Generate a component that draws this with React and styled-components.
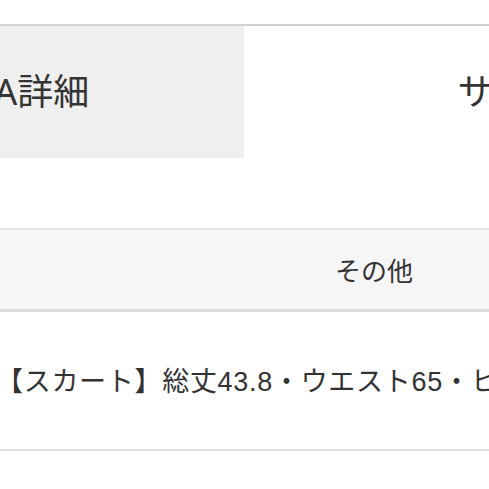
import React from 'react'
import styled, {createGlobalStyle} from 'styled-components'

const GlobalStyle = createGlobalStyle`
html, body {
  margin: 0;
  padding: 0;
  background: #fff;
  overflow: hidden;
}
body {
  font-family: 'Noto Sans', 'Noto Sans CJK JP', sans-serif;
  color: #333;
}
`

const Page = styled.div`
width: 489px;
height: 489px;
overflow: hidden;
padding-top: 24px;
box-sizing: border-box;
`

const TabBar = styled.div`
display: flex;
margin-left: -224px;
border-top: 2px solid #d2d2d2;
`

const Tab = styled.div`
flex: 0 0 ${props => props.w}px;
height: 132px;
box-sizing: border-box;
padding-bottom: 6px;
display: flex;
align-items: center;
justify-content: center;
font-size: 36px;
color: #333;
background: ${props => props.active ? '#efefef' : '#fff'};
`

const Table = styled.table`
width: 756px;
margin: 70px 0 0 -4px;
border-collapse: collapse;
table-layout: fixed;
`

const HeadCell = styled.th`
height: 79px;
padding: 0;
background: #f6f6f6;
border-top: 2px solid #e3e3e3;
border-bottom: 3px solid #dcdcdc;
font-size: 26px;
font-weight: normal;
text-align: center;
color: #333;
`

const BodyCell = styled.td`
height: 135px;
padding: 0 0 2px 0;
border-bottom: 2px solid #e3e3e3;
font-family: 'Liberation Sans', 'Noto Sans CJK JP', sans-serif;
font-size: 27px;
letter-spacing: 0.7px;
white-space: nowrap;
color: #333;
`

const App = () => {
  return (
    <Page>
      <GlobalStyle />
      <TabBar>
        <Tab w={468} active>DATA詳細</Tab>
        <Tab w={534}>サイズ</Tab>
      </TabBar>
      <Table>
        <thead>
          <tr>
            <HeadCell>その他</HeadCell>
          </tr>
        </thead>
        <tbody>
          <tr>
            <BodyCell>【スカート】総丈43.8・ウエスト65・ヒップ90</BodyCell>
          </tr>
        </tbody>
      </Table>
    </Page>
  )
}

export default App
